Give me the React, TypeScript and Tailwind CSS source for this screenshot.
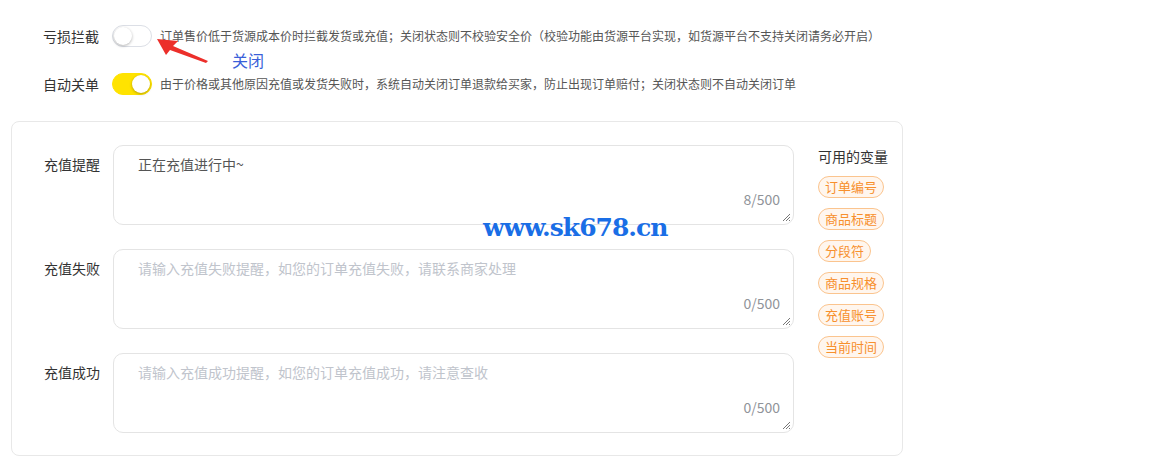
import React from "react";

const font = { fontFamily: '"Noto Sans CJK SC", "Noto Sans", sans-serif' };

function Switch({ on }: { on: boolean }) {
  return (
    <div
      className={`relative w-[40px] h-[22px] rounded-full border ${
        on ? "bg-[#ffe300] border-[#ffe300]" : "bg-white border-[#dcdfe6]"
      }`}
    >
      <div
        className={`absolute top-[1px] w-[18px] h-[18px] rounded-full bg-white shadow-[0_1px_3px_rgba(0,0,0,0.3)] ${
          on ? "left-[19px]" : "left-[1px]"
        }`}
      />
    </div>
  );
}

function Field({ label, value, placeholder }: { label: string; value?: string; placeholder: string }) {
  return (
    <div className="flex">
      <div className="w-[101px] pr-[13px] pt-[9px] text-right text-[14px] text-[#333]">{label}</div>
      <div className="relative w-[681px] h-[80px] border border-[#e4e4e4] rounded-[10px] bg-white">
        <div className={`pl-[24px] pt-[8px] text-[14px] ${value ? "text-[#555]" : "text-[#c0c4cc]"}`}>
          {value || placeholder}
        </div>
        <div className="absolute right-[13px] bottom-[14px] text-[14px] text-[#909399]">
          {(value || "").length}/500
        </div>
        <svg className="absolute right-[2px] bottom-[2px]" width="9" height="9" viewBox="0 0 9 9">
          <path d="M1 8 L8 1 M4 8 L8 4 M7 8 L8 7" stroke="#777" strokeWidth="1" />
        </svg>
      </div>
    </div>
  );
}

const tags = ["订单编号", "商品标题", "分段符", "商品规格", "充值账号", "当前时间"];

export default function App() {
  return (
    <div className="relative w-[1150px] h-[471px] bg-white" style={font}>
      {/* switch rows */}
      <div className="pt-[25px] pl-[43px]">
        <div className="flex items-center h-[22px]">
          <span className="w-[69px] text-[14px] text-[#333]">亏损拦截</span>
          <Switch on={false} />
          <span className="ml-[8px] text-[12px] text-[#555]">
            订单售价低于货源成本价时拦截发货或充值；关闭状态则不校验安全价（校验功能由货源平台实现，如货源平台不支持关闭请务必开启）
          </span>
        </div>
        <div className="pl-[189px] h-[26px] text-[16px] leading-[26px] text-[#3a5fd9]">关闭</div>
        <div className="flex items-center h-[22px]">
          <span className="w-[69px] text-[14px] text-[#333]">自动关单</span>
          <Switch on={true} />
          <span className="ml-[8px] text-[12px] text-[#555]">
            由于价格或其他原因充值或发货失败时，系统自动关闭订单退款给买家，防止出现订单赔付；关闭状态则不自动关闭订单
          </span>
        </div>
      </div>

      {/* red arrow */}
      <svg className="absolute left-[140px] top-[20px]" width="90" height="55" viewBox="0 0 90 55">
        <path d="M17 19 L38 21 L33 26 L68 41 L66 43 L30 30 L26 35 Z" fill="#ec2f2a" />
      </svg>

      {/* card */}
      <div className="ml-[11px] mt-[26px] w-[892px] h-[335px] border border-[#e8e8e8] rounded-[8px] flex">
        <div className="pt-[23px] flex flex-col gap-[24px]">
          <Field label="充值提醒" value="正在充值进行中~" placeholder="" />
          <Field label="充值失败" placeholder="请输入充值失败提醒，如您的订单充值失败，请联系商家处理" />
          <Field label="充值成功" placeholder="请输入充值成功提醒，如您的订单充值成功，请注意查收" />
        </div>
        <div className="ml-[24px] pt-[23px]">
          <div className="text-[14px] text-[#333] leading-[22px]">可用的变量</div>
          <div className="mt-[9px] flex flex-col items-start gap-[10px]">
            {tags.map((t) => (
              <span
                key={t}
                className="h-[22px] px-[6px] rounded-full border border-[#fbc48e] bg-[#fff6ee] text-[13px] leading-[20px] text-[#f7902d]"
              >
                {t}
              </span>
            ))}
          </div>
        </div>
      </div>

      {/* watermark */}
      <div
        className="absolute left-[483px] top-[210px] text-[25px] font-bold tracking-[-1px] text-[#1a6ee6] leading-[36px]"
        style={{ fontFamily: '"DejaVu Serif", "Liberation Serif", serif' }}
      >
        www.sk678.cn
      </div>
    </div>
  );
}
